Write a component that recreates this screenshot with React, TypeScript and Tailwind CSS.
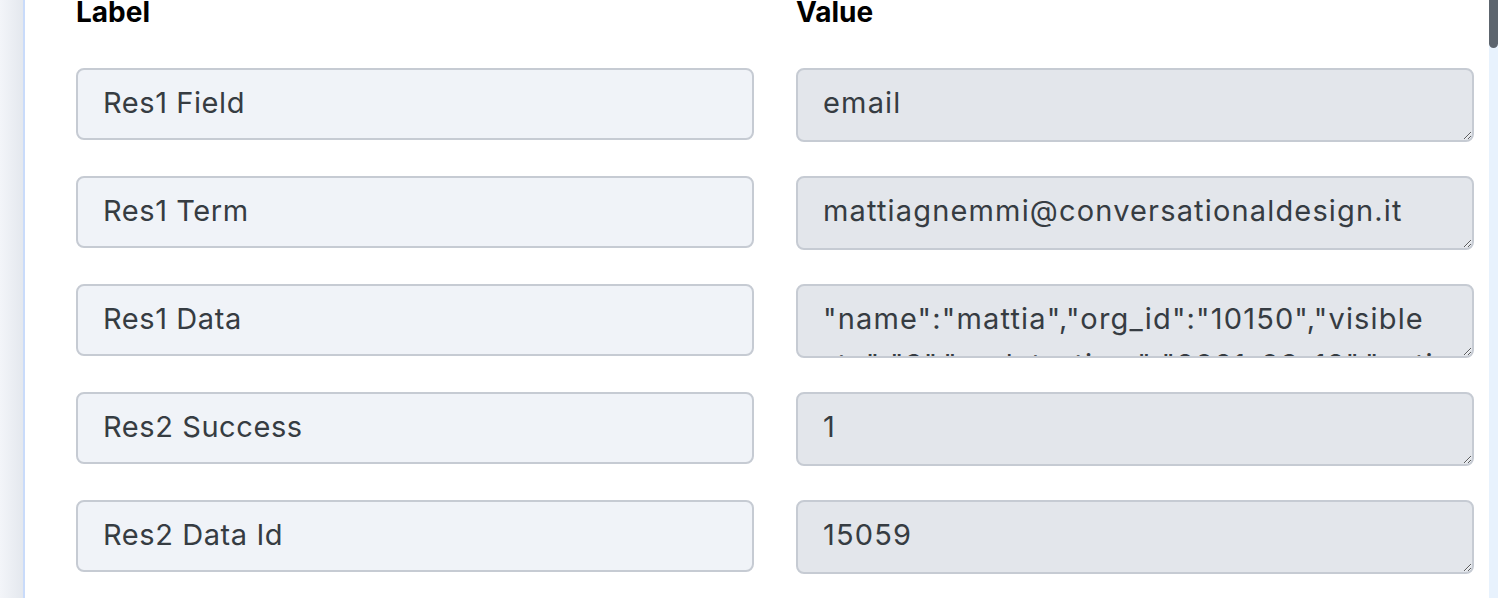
import React from "react";

const rows: { label: string; value: string }[] = [
  { label: "Res1 Field", value: "email" },
  { label: "Res1 Term", value: "mattiagnemmi@conversationaldesign.it" },
  {
    label: "Res1 Data",
    value:
      '"name":"mattia","org_id":"10150","visible\n_to":"3","update_time":"2021-03-12","active_flag":"1"}',
  },
  { label: "Res2 Success", value: "1" },
  { label: "Res2 Data Id", value: "15059" },
];

export default function App() {
  return (
    <div
      className="flex h-[598px] w-[1498px] overflow-hidden bg-white text-[#363c42]"
      style={{ fontFamily: "Inter, Lato, sans-serif" }}
    >
      <div className="w-[23px] shrink-0 bg-gradient-to-r from-[#f3f5f9] to-[#e4e8ee]" />
      <div className="w-[2px] shrink-0 bg-[#c9dbfa]" />
      <div className="flex-1 pl-[51px] pr-[15px]">
        <div className="mt-[-6px] grid grid-cols-[678px_678px] gap-x-[42px]">
          <div className="h-[40px] text-[28px] font-bold leading-[36px] text-black">Label</div>
          <div className="h-[40px] text-[28px] font-bold leading-[36px] text-black">Value</div>
        </div>
        <div className="mt-[34px] flex flex-col gap-[34px]">
          {rows.map((r) => (
            <div key={r.label} className="grid grid-cols-[678px_678px] items-start gap-x-[42px]">
              <input
                readOnly
                value={r.label}
                className="h-[72px] w-full rounded-[8px] border-2 border-[#c6cbd3] bg-[#f0f3f8] px-[25px] pb-[3px] text-[29px] tracking-[0.02em] text-[#363c42] outline-none"
              />
              <textarea
                readOnly
                value={r.value}
                wrap="off"
                className="block h-[74px] w-full resize-y overflow-hidden whitespace-pre rounded-[8px] border-2 border-[#c6cbd3] bg-[#e3e6eb] px-[25px] pt-[10px] text-[29px] leading-[1.6] tracking-[0.04em] text-[#363c42] outline-none"
              />
            </div>
          ))}
        </div>
      </div>
      <div className="flex w-[9px] shrink-0 flex-col bg-[#e8f2fd]">
        <div className="h-[48px] rounded-b-[5px] bg-[#5d656e]" />
      </div>
    </div>
  );
}
